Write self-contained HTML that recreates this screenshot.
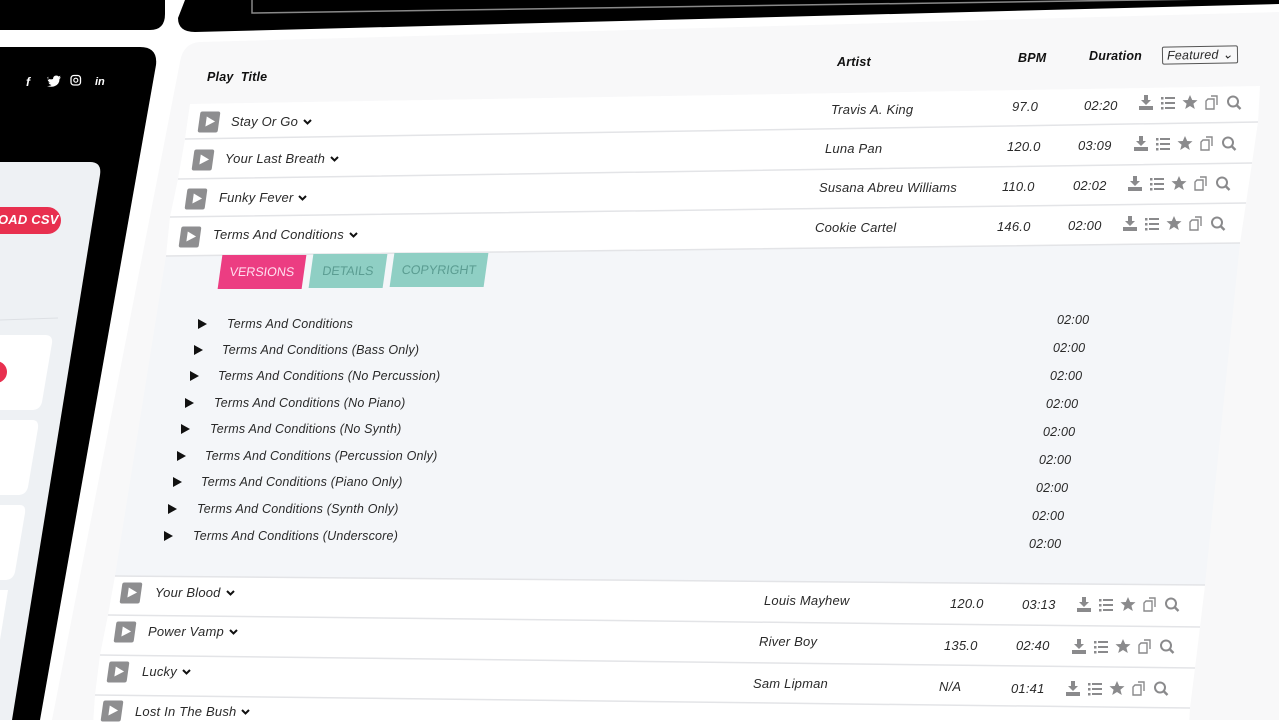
<!DOCTYPE html>
<html><head><meta charset="utf-8"><style>
body{margin:0;width:1279px;height:720px;overflow:hidden;background:#fff;font-family:"Liberation Sans",sans-serif;position:relative}
svg.bg{position:absolute;left:0;top:0}
.t{position:absolute;transform:translateY(-50%);white-space:nowrap;font-style:italic;color:#2a2a2a;font-size:13px;line-height:16px;letter-spacing:0.2px}
.h{font-weight:bold;font-size:12.5px;color:#111}
.pb{position:absolute;width:20px;height:21px;background:#8e8e90;border-radius:2px;transform:translate(-50%,-50%) skewX(-8deg)}
.pb:after{content:"";position:absolute;left:7px;top:5px;border-left:9px solid #fff;border-top:5.5px solid transparent;border-bottom:5.5px solid transparent}
.ch{display:inline-block;width:9px;height:6px;margin-left:5px;vertical-align:1px}
.tri{position:absolute;transform:translateY(-50%);border-left:9px solid #111;border-top:5px solid transparent;border-bottom:5px solid transparent}
.tab{position:absolute;height:34px;transform:skewX(-8deg);font-size:12.5px;line-height:34px;text-align:center}
</style></head><body>
<svg class="bg" width="1279" height="720" viewBox="0 0 1279 720">
<defs>
<g id="I" fill="#8a8a8c">
<path d="M5 0h4v5h3l-5 5-5-5h3z M0 11h14v4H0z"/>
<rect x="22" y="2" width="2.5" height="2.5"/><rect x="26" y="2" width="10" height="2"/>
<rect x="22" y="7" width="2.5" height="2.5"/><rect x="26" y="7" width="10" height="2"/>
<rect x="22" y="12" width="2.5" height="2.5"/><rect x="26" y="12" width="10" height="2"/>
<polygon points="51,0 53.2,5 58.5,5.3 54.4,8.7 55.8,14 51,11 46.2,14 47.6,8.7 43.5,5.3 48.8,5"/>
<path d="M69 4h6v10h-8V6z M72 1h6v9" fill="none" stroke="#8a8a8c" stroke-width="1.4"/>
<circle cx="94" cy="6.5" r="5" fill="none" stroke="#8a8a8c" stroke-width="2"/>
<path d="M97.5 10l4 4" stroke="#8a8a8c" stroke-width="2.4"/>
</g>
</defs>
<path d="M0 0H165V14Q165 30 150 30H0Z" fill="#000"/>
<path d="M185 0H1279V4L195 32Q178 32 178 18Z" fill="#000"/>
<path d="M252 0V13L1279 -2" fill="none" stroke="#888" stroke-width="1.5"/>
<path d="M0 47H140Q158 47 156 65L40 720H0Z" fill="#000"/>
<path d="M0 162H90Q102 162 100 175L12 720H0Z" fill="#eef1f4"/>
<g fill="#fff">
<path d="M0 335H45Q53 335 52 343L42 402Q40 410 32 410H0Z"/>
<path d="M0 420H32Q39 420 38 428L28 487Q26 495 18 495H0Z"/>
<path d="M0 505H20Q26 505 25 513L15 572Q13 580 5 580H0Z"/>
<path d="M0 590H8L0 640Z"/>
</g>
<line x1="0" y1="320" x2="58" y2="318" stroke="#dde0e4"/>
<path d="M200 42L1279 12V720H52L180 62Q183 43 200 42Z" fill="#f8f8f9"/>
<g fill="#fff">
<path d="M190 104L1260 86L1258 122L185 139Z"/>
<path d="M185 139L1258 122L1252 163L178 179Z"/>
<path d="M178 179L1252 163L1246 203L170 217Z"/>
<path d="M170 217L1246 203L1240 243L166 256Z"/>
</g>
<path d="M166 256L1240 243L1205 585L115 576Z" fill="#f4f6f9"/>
<g fill="#fff">
<path d="M115 576L1205 585L1200 627L108 615Z"/>
<path d="M108 615L1200 627L1195 668L100 655Z"/>
<path d="M100 655L1195 668L1190 708L95 695Z"/>
<path d="M95 695L1190 708L1188 740L92 740Z"/>
</g>
<g stroke="#e3e4e7" stroke-width="1.5" fill="none">
<path d="M185 139L1258 122M178 179L1252 163M170 217L1246 203M166 256L1240 243"/>
<path d="M115 576L1205 585M108 615L1200 627M100 655L1195 668M95 695L1190 708"/>
</g>
<use href="#I" x="1139" y="95"/>
<use href="#I" x="1134" y="136"/>
<use href="#I" x="1128" y="176"/>
<use href="#I" x="1123" y="216"/>
<use href="#I" x="1077" y="597"/>
<use href="#I" x="1072" y="639"/>
<use href="#I" x="1066" y="681"/>
<rect x="-30" y="207" width="91" height="27" rx="13.5" fill="#e8304f"/>
<circle cx="-4" cy="372" r="11" fill="#e8304f"/>
<g fill="#fff" font-family="Liberation Sans" font-size="12">
<text x="26" y="86" font-style="italic" font-weight="bold">f</text>
<path d="M47 78q3 2 6 1q0-3 3-3.5q2 0 2.5 1l2-.8-1 1.8 1.5 0-1.5 1.5q0 5-4.5 7q-3.5 1.5-8 0q3 0 4.5-1q-2.5-.5-3-2.5h1.8q-2.5-1-2.6-3l1.8.6q-2-1.6-1-3.5z"/>
<rect x="71" y="75.5" width="9.5" height="9.5" rx="2.8" fill="none" stroke="#fff" stroke-width="1.3"/>
<circle cx="75.8" cy="80.2" r="2" fill="none" stroke="#fff" stroke-width="1.2"/>
<text x="95" y="85" font-style="italic" font-weight="bold" font-size="11">in</text>
</g>
</svg>
<div class="t" style="left:-2px;top:220px;color:#fff;font-weight:bold;font-size:13px">OAD CSV</div>

<div class="t h" style="left:207px;top:77px">Play&nbsp; Title</div>
<div class="t h" style="left:837px;top:62px">Artist</div>
<div class="t h" style="left:1018px;top:58px">BPM</div>
<div class="t h" style="left:1089px;top:56px">Duration</div>
<div class="t" style="left:1162px;top:55px;border:1px solid #555;border-radius:2px;padding:0 4px;font-size:12.5px;transform:translateY(-50%) rotate(-1deg)">Featured ⌄</div>

<div class="pb" style="left:209px;top:122px"></div><div class="t" style="left:231px;top:122px">Stay Or Go<svg class="ch" viewBox="0 0 9 6"><path d="M1 1l3.5 3.5L8 1" fill="none" stroke="#111" stroke-width="2"/></svg></div>
<div class="t" style="left:831px;top:110px">Travis A. King</div><div class="t" style="left:1012px;top:107px">97.0</div><div class="t" style="left:1084px;top:106px">02:20</div>

<div class="pb" style="left:203px;top:160px"></div><div class="t" style="left:225px;top:159px">Your Last Breath<svg class="ch" viewBox="0 0 9 6"><path d="M1 1l3.5 3.5L8 1" fill="none" stroke="#111" stroke-width="2"/></svg></div>
<div class="t" style="left:825px;top:149px">Luna Pan</div><div class="t" style="left:1007px;top:147px">120.0</div><div class="t" style="left:1078px;top:146px">03:09</div>

<div class="pb" style="left:196px;top:199px"></div><div class="t" style="left:219px;top:198px">Funky Fever<svg class="ch" viewBox="0 0 9 6"><path d="M1 1l3.5 3.5L8 1" fill="none" stroke="#111" stroke-width="2"/></svg></div>
<div class="t" style="left:819px;top:188px">Susana Abreu Williams</div><div class="t" style="left:1002px;top:187px">110.0</div><div class="t" style="left:1073px;top:186px">02:02</div>

<div class="pb" style="left:190px;top:237px"></div><div class="t" style="left:213px;top:235px">Terms And Conditions<svg class="ch" viewBox="0 0 9 6"><path d="M1 1l3.5 3.5L8 1" fill="none" stroke="#111" stroke-width="2"/></svg></div>
<div class="t" style="left:815px;top:228px">Cookie Cartel</div><div class="t" style="left:997px;top:227px">146.0</div><div class="t" style="left:1068px;top:226px">02:00</div>

<div class="tab" style="left:220px;top:255px;width:84px;background:#ec3d82;color:#fde">VERSIONS</div>
<div class="tab" style="left:311px;top:254px;width:74px;background:#8fcfc4;color:#5b9d92">DETAILS</div>
<div class="tab" style="left:392px;top:253px;width:94px;background:#8fcfc4;color:#5b9d92">COPYRIGHT</div>

<div class="tri" style="left:198px;top:324px"></div><div class="t" style="left:227px;top:324px;font-size:12.5px">Terms And Conditions</div><div class="t" style="left:1057px;top:320px;font-size:12.5px">02:00</div>
<div class="tri" style="left:194px;top:350px"></div><div class="t" style="left:222px;top:350px;font-size:12.5px">Terms And Conditions (Bass Only)</div><div class="t" style="left:1053px;top:348px;font-size:12.5px">02:00</div>
<div class="tri" style="left:190px;top:376px"></div><div class="t" style="left:218px;top:376px;font-size:12.5px">Terms And Conditions (No Percussion)</div><div class="t" style="left:1050px;top:376px;font-size:12.5px">02:00</div>
<div class="tri" style="left:185px;top:403px"></div><div class="t" style="left:214px;top:403px;font-size:12.5px">Terms And Conditions (No Piano)</div><div class="t" style="left:1046px;top:404px;font-size:12.5px">02:00</div>
<div class="tri" style="left:181px;top:429px"></div><div class="t" style="left:210px;top:429px;font-size:12.5px">Terms And Conditions (No Synth)</div><div class="t" style="left:1043px;top:432px;font-size:12.5px">02:00</div>
<div class="tri" style="left:177px;top:456px"></div><div class="t" style="left:205px;top:456px;font-size:12.5px">Terms And Conditions (Percussion Only)</div><div class="t" style="left:1039px;top:460px;font-size:12.5px">02:00</div>
<div class="tri" style="left:173px;top:482px"></div><div class="t" style="left:201px;top:482px;font-size:12.5px">Terms And Conditions (Piano Only)</div><div class="t" style="left:1036px;top:488px;font-size:12.5px">02:00</div>
<div class="tri" style="left:168px;top:509px"></div><div class="t" style="left:197px;top:509px;font-size:12.5px">Terms And Conditions (Synth Only)</div><div class="t" style="left:1032px;top:516px;font-size:12.5px">02:00</div>
<div class="tri" style="left:164px;top:536px"></div><div class="t" style="left:193px;top:536px;font-size:12.5px">Terms And Conditions (Underscore)</div><div class="t" style="left:1029px;top:544px;font-size:12.5px">02:00</div>

<div class="pb" style="left:131px;top:593px"></div><div class="t" style="left:155px;top:593px">Your Blood<svg class="ch" viewBox="0 0 9 6"><path d="M1 1l3.5 3.5L8 1" fill="none" stroke="#111" stroke-width="2"/></svg></div>
<div class="t" style="left:764px;top:601px">Louis Mayhew</div><div class="t" style="left:950px;top:604px">120.0</div><div class="t" style="left:1022px;top:605px">03:13</div>

<div class="pb" style="left:125px;top:632px"></div><div class="t" style="left:148px;top:632px">Power Vamp<svg class="ch" viewBox="0 0 9 6"><path d="M1 1l3.5 3.5L8 1" fill="none" stroke="#111" stroke-width="2"/></svg></div>
<div class="t" style="left:759px;top:642px">River Boy</div><div class="t" style="left:944px;top:646px">135.0</div><div class="t" style="left:1016px;top:646px">02:40</div>

<div class="pb" style="left:118px;top:672px"></div><div class="t" style="left:142px;top:672px">Lucky<svg class="ch" viewBox="0 0 9 6"><path d="M1 1l3.5 3.5L8 1" fill="none" stroke="#111" stroke-width="2"/></svg></div>
<div class="t" style="left:753px;top:684px">Sam Lipman</div><div class="t" style="left:939px;top:687px">N/A</div><div class="t" style="left:1011px;top:689px">01:41</div>

<div class="pb" style="left:112px;top:711px"></div><div class="t" style="left:135px;top:712px">Lost In The Bush<svg class="ch" viewBox="0 0 9 6"><path d="M1 1l3.5 3.5L8 1" fill="none" stroke="#111" stroke-width="2"/></svg></div>
</body></html>
